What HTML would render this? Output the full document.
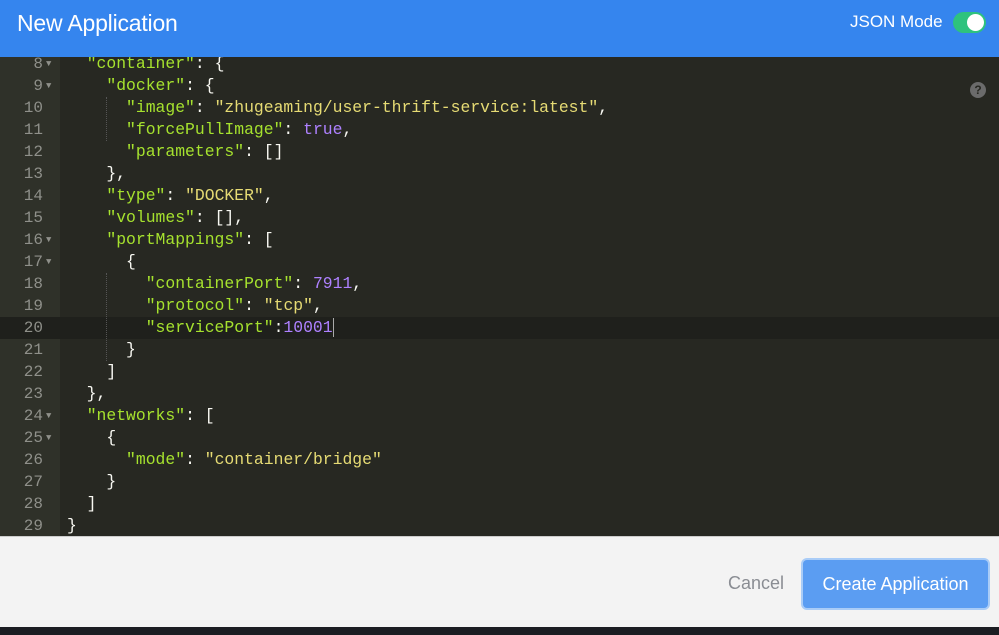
<!DOCTYPE html>
<html><head><meta charset="utf-8"><style>
*{margin:0;padding:0;box-sizing:border-box}
body{width:999px;height:635px;overflow:hidden;background:#1b1d22;font-family:"Liberation Sans",sans-serif;position:relative}
.hdr{position:absolute;left:0;top:0;width:999px;height:57px;background:#3585ee}
.hdr h1{position:absolute;left:17px;top:10px;font-size:23px;font-weight:normal;color:#fff;letter-spacing:-0.2px}
.jm{position:absolute;left:850px;top:12px;color:#fff;font-size:17px}
.tg{position:absolute;left:953px;top:12px;width:33px;height:21px;border-radius:11px;background:#2ec27e}
.tg:after{content:"";position:absolute;right:2px;top:2px;width:17px;height:17px;border-radius:50%;background:#fff}
.ed{position:absolute;left:0;top:57px;width:999px;height:479px;background:#272822;overflow:hidden}
.gut{position:absolute;left:0;top:0;width:60px;height:479px;background:#2f3129}
.lines{position:absolute;left:0;top:-4px;width:999px;font-family:"Liberation Mono",monospace;font-size:16.4px}
.ln{height:22px;line-height:22px;position:relative;white-space:pre;color:#f8f8f2}
.ln .n{position:absolute;left:0;width:43px;text-align:right;color:#8f908a;font-size:16px}
.ln .f{position:absolute;left:46px;top:0;color:#8f908a;font-size:9px}
.ln .c{position:absolute;left:67px}
.act{background:#1f201c}
.k{color:#a6e22e}.s{color:#e6db74}.p{color:#ae81ff}
.help{position:absolute;left:970px;top:25px;width:16px;height:16px;border-radius:50%;background:#6b6b6b;color:#272822;font-size:12px;font-weight:bold;text-align:center;line-height:16px}
.guide{position:absolute;width:0;border-left:1px dotted #555}
.ft{position:absolute;left:0;top:536px;width:999px;height:91px;background:#f3f3f3;border-top:1px solid #ccc}
.cancel{position:absolute;left:728px;top:36px;color:#8a8d93;font-size:18px}
.btn{position:absolute;left:803px;top:23px;width:185px;height:48px;border-radius:4px;background:#5b9df2;box-shadow:0 0 0 2px #a9ccf7;color:#fff;font-size:18px;text-align:center;line-height:48px}
</style></head><body>
<div class="hdr"><h1>New Application</h1><div class="jm">JSON Mode</div><div class="tg"></div></div>
<div class="ed"><div class="gut"></div>
<div class="lines">
<div class="ln"><span class="n">8</span><span class="f">▼</span><span class="c">  <span class="k">"container"</span>: {</span></div>
<div class="ln"><span class="n">9</span><span class="f">▼</span><span class="c">    <span class="k">"docker"</span>: {</span></div>
<div class="ln"><span class="n">10</span><span class="c">      <span class="k">"image"</span>: <span class="s">"zhugeaming/user-thrift-service:latest"</span>,</span></div>
<div class="ln"><span class="n">11</span><span class="c">      <span class="k">"forcePullImage"</span>: <span class="p">true</span>,</span></div>
<div class="ln"><span class="n">12</span><span class="c">      <span class="k">"parameters"</span>: []</span></div>
<div class="ln"><span class="n">13</span><span class="c">    },</span></div>
<div class="ln"><span class="n">14</span><span class="c">    <span class="k">"type"</span>: <span class="s">"DOCKER"</span>,</span></div>
<div class="ln"><span class="n">15</span><span class="c">    <span class="k">"volumes"</span>: [],</span></div>
<div class="ln"><span class="n">16</span><span class="f">▼</span><span class="c">    <span class="k">"portMappings"</span>: [</span></div>
<div class="ln"><span class="n">17</span><span class="f">▼</span><span class="c">      {</span></div>
<div class="ln"><span class="n">18</span><span class="c">        <span class="k">"containerPort"</span>: <span class="p">7911</span>,</span></div>
<div class="ln"><span class="n">19</span><span class="c">        <span class="k">"protocol"</span>: <span class="s">"tcp"</span>,</span></div>
<div class="ln act"><span class="n">20</span><span class="c">        <span class="k">"servicePort"</span>:<span class="p">10001</span><span style="border-left:1px solid #aaa"></span></span></div>
<div class="ln"><span class="n">21</span><span class="c">      }</span></div>
<div class="ln"><span class="n">22</span><span class="c">    ]</span></div>
<div class="ln"><span class="n">23</span><span class="c">  },</span></div>
<div class="ln"><span class="n">24</span><span class="f">▼</span><span class="c">  <span class="k">"networks"</span>: [</span></div>
<div class="ln"><span class="n">25</span><span class="f">▼</span><span class="c">    {</span></div>
<div class="ln"><span class="n">26</span><span class="c">      <span class="k">"mode"</span>: <span class="s">"container/bridge"</span></span></div>
<div class="ln"><span class="n">27</span><span class="c">    }</span></div>
<div class="ln"><span class="n">28</span><span class="c">  ]</span></div>
<div class="ln"><span class="n">29</span><span class="c">}</span></div>
</div>
<div class="guide" style="left:106px;top:40px;height:44px"></div>
<div class="guide" style="left:106px;top:216px;height:88px"></div>
<div class="help">?</div>
</div>
<div class="ft"><div class="cancel">Cancel</div><div class="btn">Create Application</div></div>
</body></html>
